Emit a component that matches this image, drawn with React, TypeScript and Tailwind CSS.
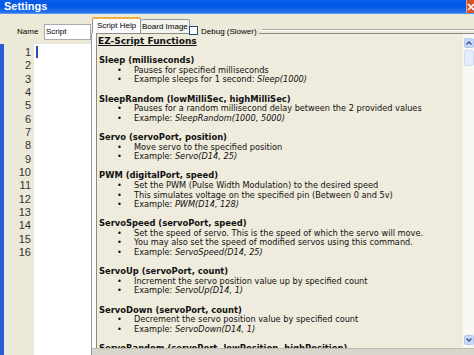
import React from "react";

type Part = { t: string; i?: boolean };
type Line =
  | { kind: "title"; text: string }
  | { kind: "head"; text: string }
  | { kind: "item"; parts: Part[] }
  | { kind: "blank" };

const lines: Line[] = [
  { kind: "title", text: "EZ-Script Functions" },
  { kind: "blank" },
  { kind: "head", text: "Sleep (milliseconds)" },
  { kind: "item", parts: [{ t: "Pauses for specified milliseconds" }] },
  { kind: "item", parts: [{ t: "Example sleeps for 1 second: " }, { t: "Sleep(1000)", i: true }] },
  { kind: "blank" },
  { kind: "head", text: "SleepRandom (lowMilliSec, highMilliSec)" },
  { kind: "item", parts: [{ t: "Pauses for a random millisecond delay between the 2 provided values" }] },
  { kind: "item", parts: [{ t: "Example: " }, { t: "SleepRandom(1000, 5000)", i: true }] },
  { kind: "blank" },
  { kind: "head", text: "Servo (servoPort, position)" },
  { kind: "item", parts: [{ t: "Move servo to the specified position" }] },
  { kind: "item", parts: [{ t: "Example: " }, { t: "Servo(D14, 25)", i: true }] },
  { kind: "blank" },
  { kind: "head", text: "PWM (digitalPort, speed)" },
  { kind: "item", parts: [{ t: "Set the PWM (Pulse Width Modulation) to the desired speed" }] },
  { kind: "item", parts: [{ t: "This simulates voltage on the specified pin (Between 0 and 5v)" }] },
  { kind: "item", parts: [{ t: "Example: " }, { t: "PWM(D14, 128)", i: true }] },
  { kind: "blank" },
  { kind: "head", text: "ServoSpeed (servoPort, speed)" },
  { kind: "item", parts: [{ t: "Set the speed of servo. This is the speed of which the servo will move." }] },
  { kind: "item", parts: [{ t: "You may also set the speed of modified servos using this command." }] },
  { kind: "item", parts: [{ t: "Example: " }, { t: "ServoSpeed(D14, 25)", i: true }] },
  { kind: "blank" },
  { kind: "head", text: "ServoUp (servoPort, count)" },
  { kind: "item", parts: [{ t: "Increment the servo position value up by specified count" }] },
  { kind: "item", parts: [{ t: "Example: " }, { t: "ServoUp(D14, 1)", i: true }] },
  { kind: "blank" },
  { kind: "head", text: "ServoDown (servoPort, count)" },
  { kind: "item", parts: [{ t: "Decrement the servo position value by specified count" }] },
  { kind: "item", parts: [{ t: "Example: " }, { t: "ServoDown(D14, 1)", i: true }] },
  { kind: "blank" },
  { kind: "head", text: "ServoRandom (servoPort, lowPosition, highPosition)" },
];

const ui = { fontFamily: '"Liberation Sans", Arial, sans-serif' };
const verdana = { fontFamily: '"DejaVu Sans", Verdana, sans-serif' };

const HelpLine: React.FC<{ line: Line }> = ({ line }) => {
  if (line.kind === "blank") return <div className="h-[9.6px]" />;
  if (line.kind === "title")
    return (
      <div className="h-[9.6px] leading-[9.6px] pl-[1px] text-[9px] font-bold underline whitespace-nowrap">
        {line.text}
      </div>
    );
  if (line.kind === "head")
    return (
      <div className="h-[9.6px] leading-[9.6px] pl-[2px] text-[8.4px] font-bold whitespace-nowrap">
        {line.text}
      </div>
    );
  return (
    <div className="h-[9.6px] leading-[9.6px] flex whitespace-nowrap text-[8.2px]">
      <span className="w-[37px] pl-[20px]">•</span>
      <span>
        {line.parts.map((p, k) => (
          <span key={k} className={p.i ? "italic" : ""}>
            {p.t}
          </span>
        ))}
      </span>
    </div>
  );
};

const ScrollBar: React.FC = () => (
  <div className="w-[11px] bg-[#f8f8f4] flex flex-col items-center pt-[4px] pb-[3px]">
    <div className="w-[10px] h-[10px] rounded-[2px] bg-[#c8d8f8] border border-[#b4c8f0] flex items-center justify-center">
      <svg width="6" height="4" viewBox="0 0 6 4">
        <path d="M0.5 3.5 L3 1 L5.5 3.5" stroke="#3a4f8c" strokeWidth="1.3" fill="none" />
      </svg>
    </div>
    <div className="w-[10px] h-[16px] mt-[2px] rounded-[2px] bg-[#e6ecf8] border border-[#d0dcf2]" />
    <div className="flex-1" />
    <div className="w-[10px] h-[10px] rounded-[2px] bg-[#c8d8f8] border border-[#b4c8f0] flex items-center justify-center">
      <svg width="6" height="4" viewBox="0 0 6 4">
        <path d="M0.5 0.5 L3 3 L5.5 0.5" stroke="#3a4f8c" strokeWidth="1.3" fill="none" />
      </svg>
    </div>
  </div>
);

export default function App() {
  return (
    <div className="w-[474px] h-[355px] overflow-hidden bg-[#ece9d8] flex flex-col text-black" style={ui}>
      {/* title bar */}
      <div className="h-[14px] flex items-stretch bg-gradient-to-b from-[#0a5fe8] via-[#0054e3] to-[#2a78ee] border-b border-[#5a94f2]">
        <div className="flex-1 pl-[4px] text-white font-bold text-[11px] leading-[13px]">
          Settings
        </div>
        <div className="w-[8px] bg-[#d8532c] border-l border-[#f0a080] flex items-center justify-end overflow-hidden">
          <svg width="7" height="8" viewBox="0 0 7 8">
            <path d="M1 1 L7 7 M7 1 L1 7" stroke="#fff" strokeWidth="1.6" />
          </svg>
        </div>
      </div>

      <div className="flex-1 flex min-h-0">
        {/* left: name + editor */}
        <div className="w-[91px] flex flex-col">
          <div className="h-[30px] flex items-start pt-[10px]">
            <span className="w-[44px] pl-[17px] text-[8px] leading-[16px]">Name</span>
            <div className="flex-1 h-[16px] bg-white border border-[#a5acb5] pl-[1px] text-[8px] leading-[14px]">
              Script
            </div>
          </div>
          <div className="flex-1 flex">
            <div className="w-[4px] bg-[#2c5ad6]" />
            <div className="w-[30px] flex flex-col items-end pr-[3px] pt-[2px] text-[11px] leading-[13.33px] text-[#333]">
              {Array.from({ length: 16 }, (_, n) => (
                <div key={n}>{n + 1}</div>
              ))}
            </div>
            <div className="flex-1 bg-white pt-[2px] pl-[2px]">
              <div className="w-[2px] h-[12px] bg-[#2a4fa8]" />
            </div>
          </div>
        </div>

        {/* right: tab control */}
        <div className="flex-1 flex flex-col min-w-0">
          <div className="relative z-10 h-[19px] flex items-end text-[8px] whitespace-nowrap">
            <div className="h-[16px] w-[49px] ml-[1px] bg-[#fcfcfe] border border-b-0 border-[#919b9c] border-t-[2px] border-t-[#f0b040] rounded-t-[2px] pl-[4px] leading-[13px]">
              Script Help
            </div>
            <div className="h-[14px] w-[49px] bg-[#f4f3ee] border border-b-0 border-l-0 border-[#919b9c] rounded-t-[2px] pl-[1px] leading-[13px]">
              Board Image
            </div>
            <div className="self-end -ml-[1px] -mb-[2px] w-[9px] h-[9px] shrink-0 bg-white border border-[#1c5180]" />
            <span className="self-end -mb-[3px] pl-[3px] pr-[2px] leading-[9px] bg-[#ece9d8]">Debug (Slower)</span>
            <div className="flex-1 self-end mb-[2px] ml-[3px] h-[2px] border-t border-[#aca899] border-b border-b-white" />
          </div>

          <div className="flex-1 flex flex-col min-h-0 border-l border-[#919b9c] bg-[#fcfcfe]">
            <div className="flex-1 flex min-h-0 pl-[4px]">
              <div className="flex-1 flex min-h-0 border-t border-l border-[#8a8a82] bg-[#efebdd]">
                <div className="flex-1 overflow-hidden pt-[3px] text-[#111]" style={verdana}>
                  {lines.map((l, k) => (
                    <HelpLine key={k} line={l} />
                  ))}
                </div>
                <ScrollBar />
              </div>
            </div>
            <div className="h-[7px] bg-[#d8d5cc] border-t border-[#bdbab0]" />
          </div>
        </div>
      </div>
    </div>
  );
}
